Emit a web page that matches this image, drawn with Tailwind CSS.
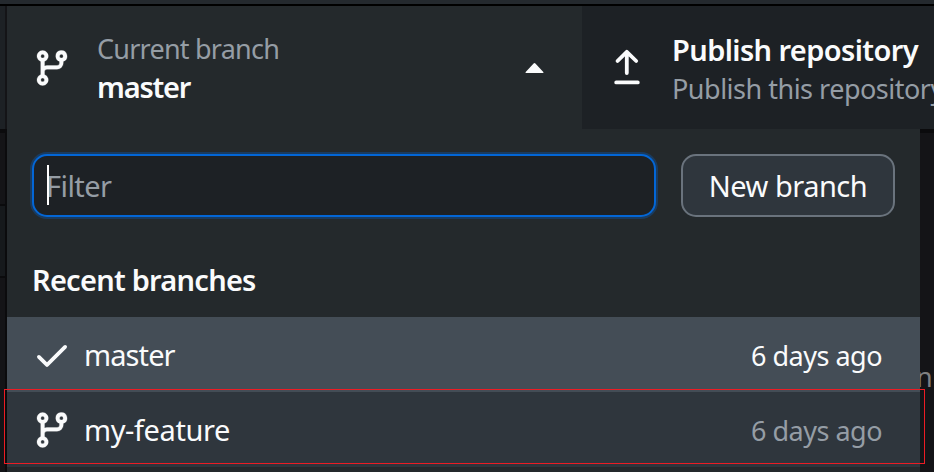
<!DOCTYPE html>
<html lang="en">
<head>
<meta charset="utf-8">
<title>Branches</title>
<script src="https://cdn.jsdelivr.net/npm/@tailwindcss/browser@4"></script>
</head>
<body class="relative flex h-[472px] w-[934px] flex-col overflow-hidden bg-[#141417] font-['Noto_Sans',sans-serif] text-[29px] leading-[40px] text-[#fafbfc] whitespace-nowrap">
<svg class="hidden">
  <symbol id="branch" viewBox="0 0 16 16"><path fill="currentColor" fill-rule="evenodd" d="M11.75 2.5a.75.75 0 100 1.5.75.75 0 000-1.5zm-2.25.75a2.25 2.25 0 113 2.122V6A2.5 2.5 0 0110 8.5H6a1 1 0 00-1 1v1.128a2.251 2.251 0 11-1.5 0V5.372a2.25 2.25 0 111.5 0v1.836A2.492 2.492 0 016 7h4a1 1 0 001-1v-.628A2.25 2.25 0 019.5 3.25zM4.25 12a.75.75 0 100 1.5.75.75 0 000-1.5zM3.5 3.25a.75.75 0 111.5 0 .75.75 0 01-1.5 0z" stroke="currentColor" stroke-width=".12"/></symbol>
</svg>
<div class="h-1 shrink-0 bg-[#24292e]"></div>
<div class="h-0.5 shrink-0 bg-black"></div>
<header class="flex h-[123px] shrink-0">
  <div class="w-[7px] shrink-0 border-r-2 border-[#141417] bg-[#1d2125]"></div>
  <div class="flex w-[575px] shrink-0 bg-[#24292c] pl-[25px]">
    <svg class="mt-[41.5px] size-10 shrink-0"><use href="#branch"/></svg>
    <div class="ml-[25px] w-[428px] pt-6">
      <div class="h-[38px] text-[27px] leading-[38px] text-[#959da5]"><span class="tracking-[-0.77px]">Current branch</span></div>
      <div class="-mt-px font-semibold leading-[40px]"><span class="tracking-[-1.2px]">master</span></div>
    </div>
    <svg class="mt-[57px] h-[11px] w-[19px]" viewBox="0 0 19 11"><path fill="currentColor" d="M9.5.1q.5 0 .9.4l7.9 8.4q.9 1.1-.5 1.1H1.2q-1.4 0-.5-1.1L8.6.5q.4-.4.9-.4z"/></svg>
  </div>
  <div class="flex min-w-0 flex-1 overflow-hidden bg-[#1d2125] pl-[32px]">
    <svg class="mt-[43px] h-9 w-[26px] shrink-0" viewBox="0 0 26 36" fill="none" stroke="currentColor" stroke-width="3.8" stroke-linecap="round" stroke-linejoin="round"><path d="M12.8 24V3M3.5 12l9.3-9.2L22.2 12M2.2 33.400h21.600"/></svg>
    <div class="ml-8 pt-6">
      <div class="h-[39px] font-semibold leading-[40px]"><span class="tracking-[-0.6px]">Publish repository</span></div>
      <div class="text-[27px] leading-[40px] text-[#959da5]"><span class="tracking-[-0.5px]">Publish this repository</span></div>
    </div>
  </div>
</header>
<div class="flex min-h-0 flex-1">
  <div class="flex w-[7px] shrink-0 flex-col border-r-2 border-[#0b0b0d]">
    <div class="h-1 bg-[#0b0b0d]"></div>
    <div class="h-[71px]"></div>
    <div class="h-[74px] border-y-2 border-[#0b0b0d] bg-[#16191c]"></div>
  </div>
  <main class="flex w-[913px] shrink-0 flex-col bg-[#24292c]">
    <div class="flex pl-[25px] pt-[25px]">
      <div class="relative flex h-[63px] w-[624px] items-center rounded-[15px] border-2 border-[#0366d6] bg-[#1d2125] pl-[12px] text-[#959da5] shadow-[0_0_0_2px_rgba(3,102,214,.3)]"><span class="tracking-[-0.55px]">Filter</span><i class="absolute left-[13px] top-[9px] h-10 w-0.5 bg-white"></i></div>
      <div class="ml-[25px] flex h-[63px] w-[214px] items-center justify-center rounded-[15px] border-2 border-[#6a737d] bg-[#2f363d] pt-px"><span class="tracking-[-0.5px]">New branch</span></div>
    </div>
    <div class="mt-[43px] h-[57px] pl-[25px] font-semibold"><span class="tracking-[-0.75px]">Recent branches</span></div>
    <div class="flex h-[75px] shrink-0 items-center bg-[#444d56] pl-[25px] pr-[38px]">
      <svg class="size-10" viewBox="0 0 16 16"><path fill="currentColor" d="M13.78 4.22a.75.75 0 010 1.06l-7.25 7.25a.75.75 0 01-1.06 0L2.22 9.28a.75.75 0 011.06-1.06L6 10.94l6.72-6.72a.75.75 0 011.06 0z"/></svg>
      <span class="ml-[12px] flex-1 pt-px tracking-[-0.9px]">master</span>
      <span class="pt-[3px] text-[27px] tracking-[-0.5px]">6 days ago</span>
    </div>
    <div class="flex h-[75px] shrink-0 items-center bg-[#2f363d] pl-[25px] pr-[38px]">
      <svg class="size-10"><use href="#branch"/></svg>
      <span class="ml-[12px] flex-1 pt-px tracking-[-0.4px]">my-feature</span>
      <span class="pt-[3px] text-[27px] tracking-[-0.5px] text-[#959da5]">6 days ago</span>
    </div>
  </main>
  <aside class="relative flex-1 overflow-hidden border-t-4 border-[#0b0b0d] text-[27px] text-[#808080]"><span class="absolute -left-[4px] top-[224px]">n</span></aside>
</div>
<div class="absolute left-1 top-[389px] h-[75px] w-[921px] border border-[#ed1c24]"></div>
</body>
</html>
